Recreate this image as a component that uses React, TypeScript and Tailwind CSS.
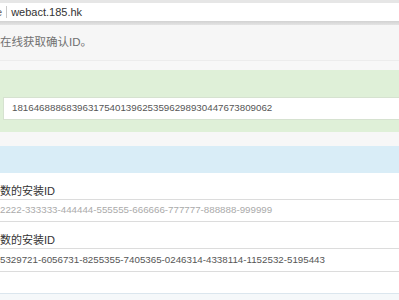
const font = "font-['Liberation_Sans','Noto_Sans_CJK_SC',sans-serif]";

function App() {
    return (
        <div className={`w-[399px] h-[300px] overflow-hidden bg-white ${font}`}>
            {/* browser chrome */}
            <div className="h-[3px] bg-[#e6e6e6]" />
            <div className="h-[18px] bg-white flex items-center whitespace-nowrap">
                <span className="ml-[-4px] text-[11px] text-[#666]">e</span>
                <span className="ml-[4px] w-px h-[12px] bg-[#c8c8c8]" />
                <span className="ml-[4px] text-[11px] text-[#333]">webact.185.hk</span>
            </div>
            <div className="h-[4px] bg-gradient-to-b from-[#d2d2d2] to-[#e4e4e4]" />

            {/* heading */}
            <div className="h-[36px] bg-[#f6f6f6] border-b border-[#ececec] flex items-center">
                <span className="text-[11.5px] text-[#707070] whitespace-nowrap">在线获取确认ID。</span>
            </div>
            <div className="h-[9px] bg-[#f7f7f7]" />

            {/* confirmation panel */}
            <div className="h-[62px] bg-[#dff0d8] pt-[27px] pl-[3px]">
                <div className="h-[23px] bg-white border border-[#d6e2d0] border-r-0 flex items-center pl-[8px]">
                    <span className="text-[9.75px] text-[#555] whitespace-nowrap">181646888683963175401396253596298930447673809062</span>
                </div>
            </div>
            <div className="h-[14px] bg-[#f7f7f7]" />

            {/* install id panel */}
            <div className="h-[27px] bg-[#d9edf7]" />
            <div className="flex flex-col pt-[10px]">
                <div className="h-[16px] flex items-center">
                    <span className="text-[11px] text-[#333] whitespace-nowrap">数的安装ID</span>
                </div>
                <div className="h-[23px] border-y border-[#dcdcdc] flex items-center">
                    <span className="text-[9.75px] text-[#aaa] whitespace-nowrap">2222-333333-444444-555555-666666-777777-888888-999999</span>
                </div>
                <div className="h-[10px]" />
                <div className="h-[16px] flex items-center">
                    <span className="text-[11px] text-[#333] whitespace-nowrap">数的安装ID</span>
                </div>
                <div className="h-[24px] border-y border-[#dcdcdc] flex items-center">
                    <span className="text-[9.75px] text-[#555] whitespace-nowrap">5329721-6056731-8255355-7405365-0246314-4338114-1152532-5195443</span>
                </div>
                <div className="h-[21px]" />
                <div className="h-[7px] border-t border-[#dbe6ee] bg-[#f5f8fa]" />
            </div>
        </div>
    );
}

export default App;
